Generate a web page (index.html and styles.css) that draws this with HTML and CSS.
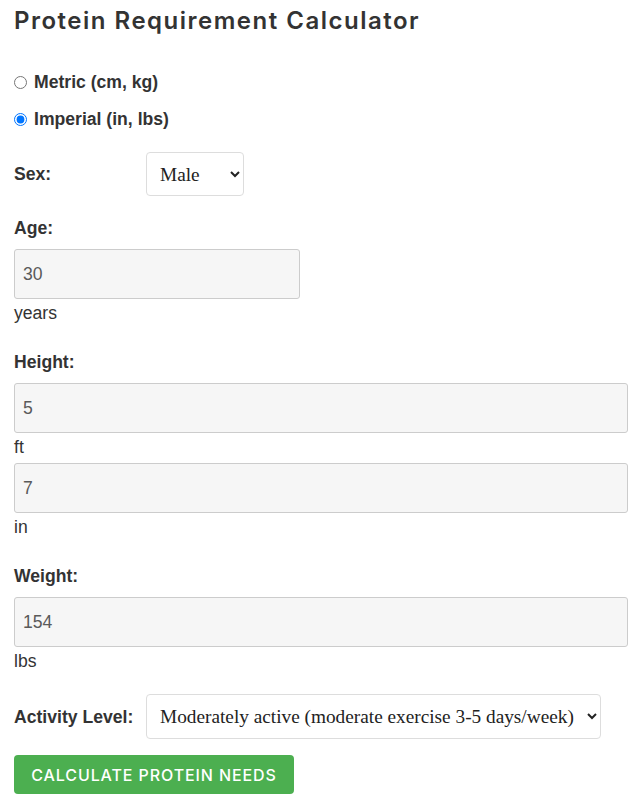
FILE: index.html
```html
<!DOCTYPE html>
<html>
<head>
  <title>Protein Requirement Calculator</title>
  <link rel="stylesheet" href="styles.css">
</head>
<body>
  <div class="calculator">
    <h1>Protein Requirement Calculator</h1>

    <div class="units">
      <label class="radio"><input type="radio" name="units" value="metric"> Metric (cm, kg)</label>
      <label class="radio"><input type="radio" name="units" value="imperial" checked> Imperial (in, lbs)</label>
    </div>

    <div class="row row-sex">
      <label class="row-label" for="sex">Sex:</label>
      <select id="sex" class="select">
        <option>Male</option>
        <option>Female</option>
      </select>
    </div>

    <div class="field">
      <label class="field-label" for="age">Age:</label>
      <input type="text" id="age" class="input input-short" value="30">
      <span class="unit">years</span>
    </div>

    <div class="field">
      <label class="field-label" for="feet">Height:</label>
      <input type="text" id="feet" class="input" value="5">
      <span class="unit">ft</span>
      <input type="text" id="inches" class="input" value="7">
      <span class="unit">in</span>
    </div>

    <div class="field">
      <label class="field-label" for="weight">Weight:</label>
      <input type="text" id="weight" class="input" value="154">
      <span class="unit">lbs</span>
    </div>

    <div class="row row-activity">
      <label class="row-label" for="activity">Activity Level:</label>
      <select id="activity" class="select">
        <option>Sedentary (little or no exercise)</option>
        <option>Lightly active (light exercise 1-3 days/week)</option>
        <option selected>Moderately active (moderate exercise 3-5 days/week)</option>
        <option>Very active (hard exercise 6-7 days/week)</option>
      </select>
    </div>

    <button class="btn" type="button">Calculate Protein Needs</button>
  </div>
</body>
</html>
```

FILE: styles.css
```css
body {
  margin: 0;
  font-family: 'Liberation Sans', Arial, sans-serif;
  font-size: 17.6px;
  color: #333;
  background: #fff;
}

.calculator {
  width: 614px;
  padding: 0 14px;
}

h1 {
  margin: 6px 0 0;
  font-family: Inter, 'Open Sans', sans-serif;
  font-size: 24px;
  font-weight: 600;
  line-height: 30px;
  letter-spacing: 1.5px;
  color: #333;
}

.units {
  margin-top: 36px;
  display: flex;
  flex-direction: column;
  gap: 17px;
}

.radio {
  display: flex;
  align-items: center;
  gap: 7px;
  font-weight: bold;
  line-height: 20px;
}

.radio input {
  margin: 0;
  width: 13px;
  height: 13px;
}

.row {
  display: flex;
  align-items: center;
}

.row-sex {
  margin-top: 23px;
}

.row-activity {
  margin-top: 17px;
}

.row-label {
  width: 132px;
  flex-shrink: 0;
  font-weight: bold;
  line-height: 20px;
}

.select {
  height: 44px;
  padding: 0 10px 0 9px;
  border: 1px solid #ddd;
  border-radius: 4px;
  background: #fff;
  font-family: 'Liberation Serif', 'Times New Roman', serif;
  font-size: 19.3px;
  color: #222;
}

.row-activity .select {
  height: 45px;
}

.field {
  margin-top: 23px;
  display: flex;
  flex-direction: column;
  align-items: flex-start;
}

.row-sex + .field {
  margin-top: 22px;
}

.field-label {
  font-weight: bold;
  line-height: 20px;
  margin-bottom: 11px;
}

.input {
  box-sizing: border-box;
  width: 100%;
  height: 50px;
  padding: 0 8px;
  border: 1px solid #ccc;
  border-radius: 3px;
  background: #f6f6f6;
  font-family: 'Liberation Sans', Arial, sans-serif;
  font-size: 17.6px;
  color: #5a5a5a;
}

.input-short {
  width: 286px;
}

.unit {
  line-height: 20px;
  margin: 4px 0 6px;
}

.btn {
  margin-top: 16px;
  width: 280px;
  height: 39px;
  border: none;
  border-radius: 4px;
  background: #4CAF50;
  color: #fff;
  font-family: Inter, 'Open Sans', sans-serif;
  font-size: 16px;
  font-weight: 500;
  letter-spacing: 0.9px;
  text-transform: uppercase;
  cursor: pointer;
}
```
